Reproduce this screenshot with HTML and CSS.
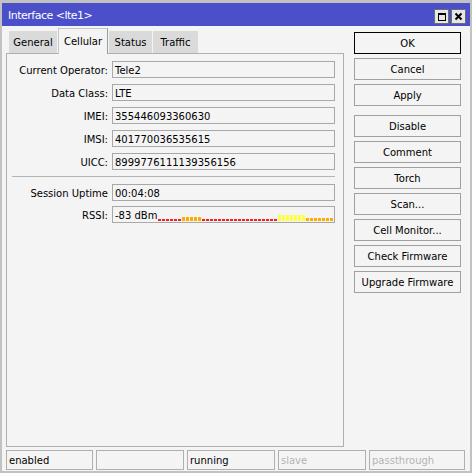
FILE: index.html
```html
<!DOCTYPE html>
<html>
<head>
<meta charset="utf-8">
<link rel="stylesheet" href="styles.css">
</head>
<body>
<div class="window">
  <div class="titlebar">
    <span class="title">Interface &lt;lte1&gt;</span>
    <div class="tbtns">
      <span class="tbtn">
        <svg width="15" height="15" viewBox="0 0 15 15">
          <rect x="0.5" y="0.5" width="14" height="14" fill="#e6e6e6" stroke="#6e6e6e"/>
          <rect x="4.5" y="4.5" width="7" height="7" fill="none" stroke="#000"/>
          <rect x="4" y="4" width="8" height="2" fill="#000"/>
        </svg>
      </span>
      <span class="tbtn">
        <svg width="15" height="15" viewBox="0 0 15 15">
          <rect x="0.5" y="0.5" width="14" height="14" fill="#e6e6e6" stroke="#6e6e6e"/>
          <path d="M4.5 4.5 L10.5 10.5 M10.5 4.5 L4.5 10.5" stroke="#000" stroke-width="2"/>
        </svg>
      </span>
    </div>
  </div>
  <div class="main">
    <div class="left">
      <div class="tabs">
        <div class="tab t-general">General</div>
        <div class="tab sel t-cell">Cellular</div>
        <div class="tab t-status">Status</div>
        <div class="tab t-traffic">Traffic</div>
      </div>
      <div class="panel">
        <div class="row"><div class="lbl">Current Operator:</div><div class="val">Tele2</div></div>
        <div class="row"><div class="lbl">Data Class:</div><div class="val">LTE</div></div>
        <div class="row"><div class="lbl">IMEI:</div><div class="val">355446093360630</div></div>
        <div class="row"><div class="lbl">IMSI:</div><div class="val">401770036535615</div></div>
        <div class="row"><div class="lbl">UICC:</div><div class="val">8999776111139356156</div></div>
        <div class="sep"></div>
        <div class="row tight"><div class="lbl">Session Uptime</div><div class="val">00:04:08</div></div>
        <div class="row"><div class="lbl">RSSI:</div>
          <div class="val rssi">
            <span class="rtext">-83 dBm</span>
            <div class="bars">
              <div class="seg red s6"></div>
              <div class="seg orange1 s5"></div>
              <div class="seg red s19"></div>
              <div class="seg yellow s7"></div>
              <div class="seg orange2 s7"></div>
            </div>
          </div>
        </div>
      </div>
    </div>
    <div class="right">
      <div class="btn ok">OK</div>
      <div class="btn">Cancel</div>
      <div class="btn">Apply</div>
      <div class="btn group">Disable</div>
      <div class="btn">Comment</div>
      <div class="btn">Torch</div>
      <div class="btn">Scan...</div>
      <div class="btn">Cell Monitor...</div>
      <div class="btn">Check Firmware</div>
      <div class="btn">Upgrade Firmware</div>
    </div>
  </div>
  <div class="status">
    <div class="cell c1">enabled</div>
    <div class="cell"></div>
    <div class="cell">running</div>
    <div class="cell dim">slave</div>
    <div class="cell dim wide">passthrough</div>
  </div>
</div>
</body>
</html>
```
FILE: styles.css
```css
html, body {
  margin: 0;
  padding: 0;
}
body {
  background: #c2c2c2;
  width: 472px;
  height: 473px;
  overflow: hidden;
  font-family: "DejaVu Sans", sans-serif;
  font-size: 10px;
  color: #000;
}
.window {
  margin: 3px 2px 0 2px;
  width: 468px;
  height: 468px;
  background: #f4f4f4;
  display: flex;
  flex-direction: column;
}
.titlebar {
  box-sizing: border-box;
  height: 23px;
  flex: none;
  background: #4b4fc9;
  display: flex;
  justify-content: space-between;
  padding: 0 4px 0 6px;
  color: #fff;
}
.title {
  font-size: 11px;
  letter-spacing: -0.5px;
  line-height: 21px;
  padding-top: 2px;
}
.tbtns {
  display: flex;
  gap: 2px;
  align-items: flex-end;
  padding-bottom: 2px;
}
.tbtn {
  display: block;
  width: 15px;
  height: 15px;
}
.tbtn svg {
  display: block;
}
.main {
  display: flex;
  height: 421px;
  flex: none;
}
.left {
  margin-left: 4px;
  width: 338px;
  display: flex;
  flex-direction: column;
}
.tabs {
  margin-top: 2px;
  height: 25px;
  display: flex;
  align-items: flex-end;
  padding-left: 3px;
  gap: 1px;
}
.tab {
  box-sizing: border-box;
  height: 22px;
  background: #dadada;
  text-align: center;
  line-height: 24px;
  overflow: hidden;
}
.tab.sel {
  height: 26px;
  margin-bottom: -1px;
  background: #f4f4f4;
  border: 1px solid #c6c6c6;
  border-right-color: #9c9c9c;
  border-bottom: none;
  line-height: 25px;
  position: relative;
  z-index: 1;
}
.t-general { width: 48px; }
.t-cell { width: 50px; }
.t-status { width: 43px; }
.t-traffic { width: 45px; }
.panel {
  box-sizing: border-box;
  height: 394px;
  border: 1px solid #b0b0b0;
  padding-top: 7px;
}
.row {
  display: flex;
  height: 17px;
  margin-bottom: 6px;
}
.row.tight {
  margin-bottom: 5px;
}
.lbl {
  width: 101px;
  margin-right: 4px;
  text-align: right;
  line-height: 17px;
  padding-top: 1px;
  white-space: nowrap;
}
.val {
  box-sizing: border-box;
  width: 223px;
  height: 17px;
  border: 1px solid #a8a8a8;
  padding: 1px 2px 0 2px;
  line-height: 15px;
  white-space: nowrap;
  overflow: visible;
}
.sep {
  height: 1px;
  background: #b4b4b4;
  margin: 0 0 7px 5px;
  width: 323px;
}
.rssi {
  display: flex;
  padding: 0 0 0 2px;
}
.rtext {
  width: 43px;
  flex: none;
  padding-top: 1px;
}
.bars {
  display: flex;
  align-items: flex-end;
  padding-bottom: 1px;
}
.seg {
  flex: none;
}
.s5 { width: 20px; }
.s6 { width: 24px; }
.s7 { width: 28px; }
.s19 { width: 76px; }
.red {
  height: 2px;
  background: repeating-linear-gradient(90deg, #ff1c1c 0 3px, transparent 3px 4px);
}
.orange1 {
  height: 4px;
  background: repeating-linear-gradient(90deg, #ffab00 0 3px, transparent 3px 4px);
}
.yellow {
  height: 6px;
  background: repeating-linear-gradient(90deg, #ffff40 0 3px, transparent 3px 4px);
}
.orange2 {
  height: 3px;
  background: repeating-linear-gradient(90deg, #ffab00 0 3px, transparent 3px 4px);
}
.right {
  margin-left: 10px;
  width: 107px;
  padding-top: 6px;
  display: flex;
  flex-direction: column;
  gap: 4px;
}
.btn {
  box-sizing: border-box;
  height: 22px;
  border: 1px solid #a0a0a0;
  text-align: center;
  padding-top: 1px;
  line-height: 20px;
  white-space: nowrap;
}
.btn.ok {
  border-color: #000;
}
.btn.group {
  margin-top: 5px;
}
.status {
  margin-top: 3px;
  padding-left: 4px;
  display: flex;
  gap: 3px;
}
.cell {
  box-sizing: border-box;
  width: 88px;
  height: 20px;
  border: 1px solid #b0b0b0;
  padding: 1px 0 0 2px;
  line-height: 18px;
  white-space: nowrap;
}
.cell.c1 { width: 87px; }
.cell.wide { width: 96px; }
.cell.dim { color: #b4b4b4; }
```
